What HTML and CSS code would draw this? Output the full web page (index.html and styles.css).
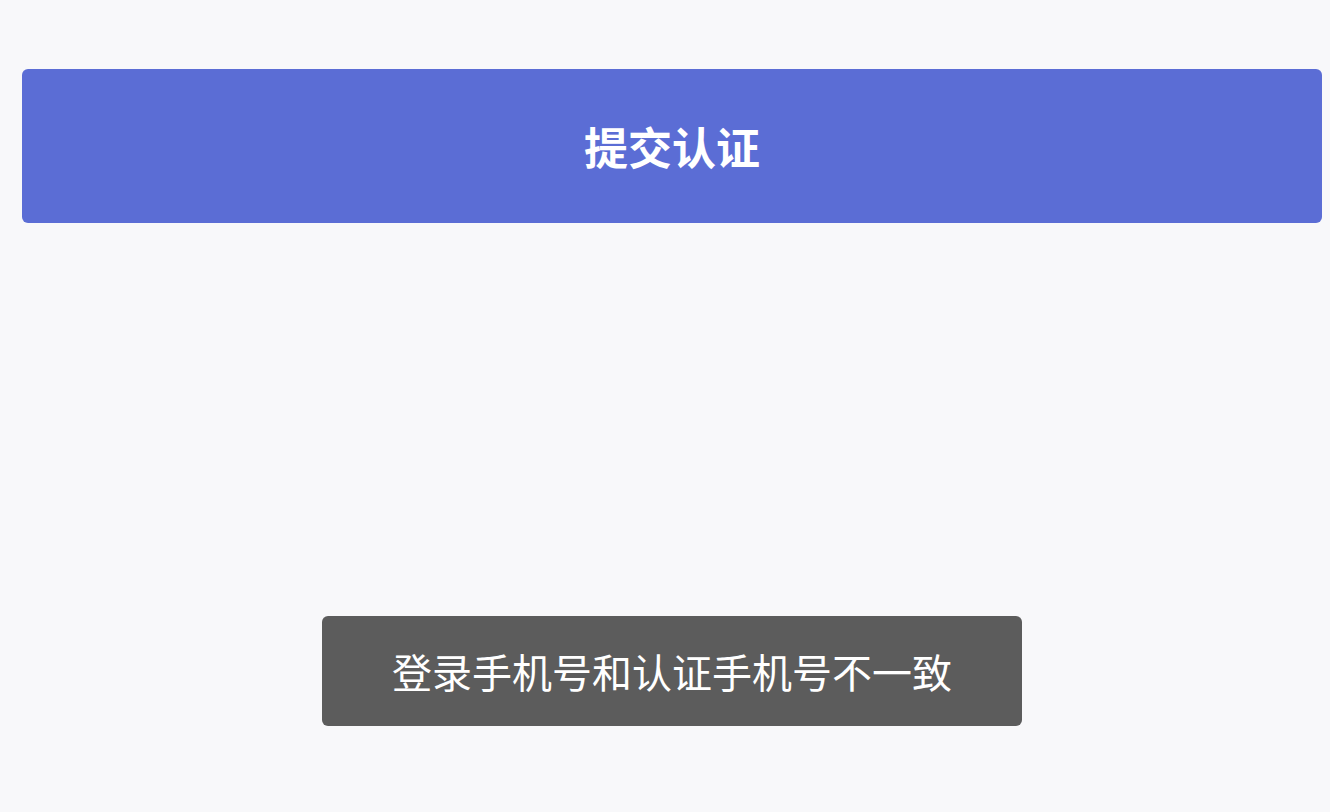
FILE: index.html
```html
<!DOCTYPE html>
<html lang="zh-CN">
<head>
<meta charset="utf-8">
<title>提交认证</title>
<link rel="stylesheet" href="styles.css">
</head>
<body>
<main class="page">
  <button class="submit-btn" type="button">提交认证</button>
</main>
<div class="toast-layer">
  <div class="toast">登录手机号和认证手机号不一致</div>
</div>
</body>
</html>
```

FILE: styles.css
```css
html, body {
  margin: 0;
  padding: 0;
  height: 100%;
}
body {
  background: #f8f8fa;
  font-family: "Noto Sans CJK SC", "Noto Sans", sans-serif;
}
.page {
  padding: 69px 8px 0 22px;
}
.submit-btn {
  display: flex;
  align-items: center;
  justify-content: center;
  width: 100%;
  height: 154px;
  border: none;
  border-radius: 6px;
  background: #5b6dd5;
  color: #ffffff;
  font-family: "Noto Sans CJK SC", "Noto Sans", sans-serif;
  font-size: 44px;
  font-weight: 700;
  padding: 0;
  letter-spacing: 0;
}
.toast-layer {
  position: fixed;
  left: 22px;
  right: 8px;
  top: 616px;
  display: flex;
  justify-content: center;
}
.toast {
  width: 700px;
  height: 110px;
  box-sizing: border-box;
  display: flex;
  align-items: center;
  justify-content: center;
  background: #5c5c5c;
  border-radius: 6px;
  color: #ffffff;
  font-size: 40px;
  font-weight: 400;
}
```
